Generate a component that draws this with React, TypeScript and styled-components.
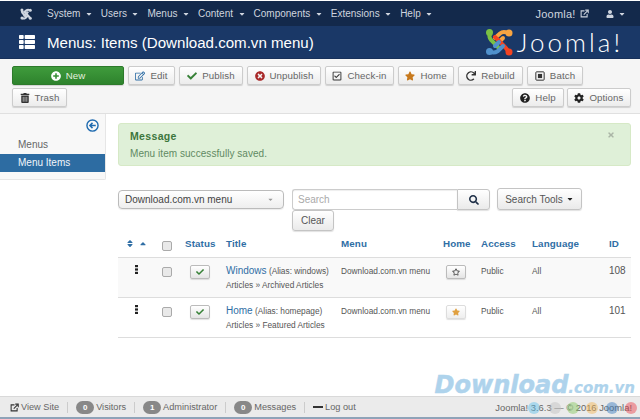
import React from "react";
import styled, { createGlobalStyle } from "styled-components";
import {
  FaPlusCircle, FaRegEdit, FaCheck, FaTimesCircle, FaRegCheckSquare, FaStar, FaRegStar, FaRedo,
  FaTrashAlt, FaQuestionCircle, FaCog, FaThList, FaUser, FaSearch, FaCaretDown, FaSort, FaCaretUp,
  FaTimes,
} from "react-icons/fa";

const Global = createGlobalStyle`
  html, body { margin: 0; padding: 0; background: #fff; }
  body { font-family: "Liberation Sans", Arial, sans-serif; color: #555; width: 640px; height: 419px; overflow: hidden; }
  * { box-sizing: border-box; }
`;

const Page = styled.div`
  position: relative;
  width: 640px;
  height: 419px;
  display: flex;
  flex-direction: column;
  overflow: hidden;
`;

const TopBar = styled.nav`
  height: 25px;
  margin-top: 1px;
  background: #13294b;
  display: flex;
  align-items: center;
  color: #cfd5df;
  font-size: 10px;
  padding: 0 14px 0 20px;
`;
const NavMenu = styled.div`
  display: flex;
  align-items: center;
  margin-left: 15px;
  gap: 8px;
`;
const NavItem = styled.span`
  display: inline-flex;
  align-items: center;
  gap: 4.5px;
  svg { width: 8px; height: 8px; }
`;
const NavRight = styled.div`
  margin-left: auto;
  display: flex;
  align-items: center;
  gap: 17px;
`;
const NavLink = styled.span`
  display: inline-flex;
  align-items: center;
  font-size: 11px;
  letter-spacing: 0.2px;
`;
const SmallIcon = styled.span`
  display: inline-flex;
  margin-left: 4px;
  svg { width: 9px; height: 9px; }
`;

const Header = styled.header`
  height: 33px;
  background: #1a3867;
  display: flex;
  align-items: center;
  padding-left: 19px;
  color: #fff;
  border-bottom: 1px solid #17305a;
`;
const HeaderIcon = styled.span`
  display: inline-flex;
  margin-right: 12px;
  svg { width: 16px; height: 16px; display: block; }
`;
const Title = styled.h1`
  margin: 0;
  font-size: 15.1px;
  font-weight: 400;
  white-space: nowrap;
`;
const Brand = styled.div`
  margin-left: auto;
  margin-right: 17px;
  display: flex;
  align-items: center;
  gap: 4px;
`;
const BrandText = styled.span`
  font-family: Lato, "Liberation Sans", sans-serif;
  font-weight: 300;
  font-size: 26px;
  line-height: 28px;
  letter-spacing: 3px;
  color: #fff;
`;

const Toolbar = styled.div`
  background: #f5f5f5;
  border-bottom: 1px solid #e0e0e0;
  height: 55px;
  padding: 7px 9px 0 12px;
  display: flex;
  flex-wrap: wrap;
  align-content: flex-start;
  column-gap: 4px;
  row-gap: 3px;
`;
const ToolButton = styled.button<{ $w: number }>`
  width: ${(p) => p.$w}px;
  height: 19px;
  padding: 0;
  display: inline-flex;
  align-items: center;
  justify-content: center;
  gap: 5px;
  border-radius: 2px;
  font-family: inherit;
  font-size: 9.7px;
  letter-spacing: 0.1px;
  color: #666;
  background: linear-gradient(#fff, #ececec);
  border: 1px solid #ccc;
  box-shadow: 0 1px 1px rgba(0, 0, 0, 0.15);
  svg { width: 10px; height: 10px; }
`;
const NewButton = styled(ToolButton)`
  color: #e3f0df;
  border-color: #2d7a2b;
  background: linear-gradient(#3f9b3c, #2e832d);
`;
const RightGroup = styled.div`
  margin-left: auto;
  display: flex;
  gap: 3px;
`;

const Body = styled.div`
  flex: 1;
  display: flex;
  min-height: 0;
`;
const Sidebar = styled.aside`
  width: 106px;
  height: 66px;
  background: #f8f8f8;
  border-right: 1px solid #e6e6e6;
  border-bottom: 1px solid #e6e6e6;
  border-bottom-right-radius: 2px;
  display: flex;
  flex-direction: column;
`;
const Collapse = styled.div`
  height: 22px;
  display: flex;
  justify-content: flex-end;
  align-items: flex-start;
  padding: 5px 6px 0 0;
  color: #1f6bb0;
`;
const SideItem = styled.div<{ $active?: boolean }>`
  height: 18px;
  line-height: 18px;
  font-size: 10px;
  padding-left: 18px;
  color: ${(p) => (p.$active ? "#f2f6fa" : "#666")};
  background: ${(p) => (p.$active ? "#2d6ca2" : "transparent")};
`;
const Main = styled.main`
  flex: 1;
  padding: 9px 9px 0 12px;
  min-width: 0;
`;
const Alert = styled.div`
  position: relative;
  height: 43px;
  background: #dff0d8;
  border: 1px solid #d6e9c6;
  border-radius: 3px;
  padding: 5px 11px;
  color: #5f8a63;
`;
const AlertTitle = styled.div`
  font-size: 10.5px;
  font-weight: 700;
  letter-spacing: 0.35px;
  color: #3c763d;
  line-height: 14px;
`;
const AlertText = styled.div`
  font-size: 10px;
  letter-spacing: 0.05px;
  line-height: 14px;
  margin-top: 4px;
`;
const Close = styled.span`
  position: absolute;
  right: 15px;
  top: 7px;
  color: #aab5a6;
  display: flex;
  svg { width: 8px; height: 8px; }
`;
const Filters = styled.div`
  margin-top: 22px;
  display: flex;
  align-items: flex-start;
`;
const Select = styled.div`
  width: 166px;
  height: 19px;
  margin-top: 2px;
  margin-right: 8px;
  padding: 0 9px 0 6px;
  display: flex;
  align-items: center;
  justify-content: space-between;
  font-size: 10px;
  color: #444;
  background: linear-gradient(#fff, #eee);
  border: 1px solid #bbb;
  border-radius: 4px;
  box-shadow: 0 1px 1px rgba(0,0,0,0.08);
  svg { width: 7px; height: 7px; color: #999; }
`;
const SearchCol = styled.div`
  width: 198px;
  display: flex;
  flex-direction: column;
  margin-right: 7px;
`;
const SearchRow = styled.div`
  display: flex;
  height: 21px;
  margin-top: 1px;
`;
const Input = styled.div`
  width: 165px;
  border: 1px solid #ccc;
  border-right: 0;
  border-radius: 3px 0 0 3px;
  background: #fff;
  box-shadow: inset 0 1px 1px rgba(0,0,0,0.07);
  font-size: 10px;
  color: #aaa;
  padding: 4px 5px;
  line-height: 12px;
`;
const SearchBtn = styled.div`
  width: 33px;
  border: 1px solid #c4c4c4;
  border-radius: 0 3px 3px 0;
  background: linear-gradient(#fff, #eaeaea);
  display: flex;
  align-items: center;
  justify-content: center;
  color: #1f3048;
  box-shadow: 0 1px 1px rgba(0,0,0,0.12);
  svg { width: 10px; height: 10px; }
`;
const ClearBtn = styled.div`
  width: 42px;
  height: 21px;
  border: 1px solid #c4c4c4;
  border-radius: 3px;
  background: linear-gradient(#fff, #eaeaea);
  box-shadow: 0 1px 1px rgba(0,0,0,0.12);
  font-size: 10px;
  color: #555;
  display: flex;
  align-items: center;
  justify-content: center;
`;
const ToolsBtn = styled.div`
  width: 85px;
  height: 22px;
  border: 1px solid #c4c4c4;
  border-radius: 3px;
  background: linear-gradient(#fff, #eaeaea);
  box-shadow: 0 1px 1px rgba(0,0,0,0.12);
  font-size: 10px;
  color: #555;
  display: flex;
  align-items: center;
  justify-content: center;
  gap: 3px;
  svg { width: 8px; height: 8px; color: #222; }
`;

const columns = "40px 27px 41px 115px 102px 38px 51px 77px 22px";
const HeadRow = styled.div`
  display: grid;
  grid-template-columns: ${columns};
  height: 27px;
  align-items: center;
  padding-bottom: 1px;
  border-bottom: 1px solid #ddd;
  font-size: 9.8px;
  font-weight: 700;
  color: #2f6ea5;
  letter-spacing: 0.1px;
`;
const Row = styled.div<{ $odd?: boolean }>`
  display: grid;
  grid-template-columns: ${columns};
  height: 40px;
  padding-top: 6px;
  align-items: start;
  border-bottom: 1px solid #ddd;
  background: ${(p) => (p.$odd ? "#f9f9f9" : "#fff")};
  font-size: 8.3px;
  color: #555;
`;
const SortIcons = styled.div`
  display: flex;
  gap: 5px;
  padding-left: 8px;
  svg { width: 8px; height: 9px; }
`;
const Check = styled.span`
  display: block;
  width: 10px;
  height: 10px;
  margin: 0 0 0 4px;
  background: #e9e9e9;
  border: 1px solid #aaa;
  border-radius: 2px;
`;
const HeadCheck = styled(Check)`
  margin-top: 5px;
`;
const CheckCell = styled.div`
  padding-top: 3px;
`;
const Handle = styled.div`
  padding: 1px 0 0 17px;
  color: #222;
  svg { width: 3px; height: 9px; display: block; }
`;
const StateBtn = styled.div<{ $ml: number; $flat?: boolean }>`
  margin-left: ${(p) => p.$ml}px;
  margin-top: 1px;
  width: 20px;
  height: 14px;
  display: flex;
  align-items: center;
  justify-content: center;
  border: 1px solid ${(p) => (p.$flat ? "#ddd" : "#bbb")};
  border-radius: 2px;
  background: linear-gradient(#fff, ${(p) => (p.$flat ? "#eee" : "#e4e4e4")});
  box-shadow: 0 1px 1px rgba(0,0,0,0.12);
  svg { width: 8px; height: 8px; }
`;
const TitleLine = styled.div`
  line-height: 13px;
  white-space: nowrap;
`;
const TitleLink = styled.span`
  font-size: 10px;
  color: #2f6ea5;
`;
const SubLine = styled.div`
  line-height: 13px;
  margin-top: 1px;
  white-space: nowrap;
`;
const PlainCell = styled.div`
  line-height: 14px;
  white-space: nowrap;
`;
const IdCell = styled.div`
  font-size: 10px;
  line-height: 14px;
`;

const Footer = styled.footer`
  position: absolute;
  left: 0;
  right: 0;
  bottom: 0;
  height: 23px;
  border-top: 1px solid #d9d9d9;
  border-bottom: 2px solid #8fa3b8;
  background: #ebebeb;
  display: flex;
  align-items: center;
  padding: 0 8px 0 10px;
  font-size: 9.2px;
  color: #666;
`;
const FootItem = styled.span`
  display: inline-flex;
  align-items: center;
  gap: 2px;
  padding-right: 8px;
  margin-right: 8px;
  border-right: 1px solid #ccc;
  height: 11px;
  svg { width: 9px; height: 9px; }
`;
const LastItem = styled(FootItem)`
  border: 0;
`;
const Badge = styled.span`
  width: 18px;
  height: 13px;
  border-radius: 7px;
  background: #888;
  color: #fff;
  font-size: 8px;
  font-weight: 700;
  display: inline-flex;
  align-items: center;
  justify-content: center;
`;
const Dash = styled.span`
  display: inline-block;
  width: 10px;
  height: 2px;
  background: #333;
`;
const FootRight = styled.span`
  margin-left: auto;
  font-size: 9.4px;
  white-space: nowrap;
`;
const Watermark = styled.div`
  position: absolute;
  right: 5px;
  top: 373px;
  font-family: "DejaVu Sans", sans-serif;
  font-style: italic;
  font-weight: 700;
  color: #aed3ec;
  line-height: 24px;
  white-space: nowrap;
`;
const WaterBig = styled.span`
  font-size: 24px;
  -webkit-text-stroke: 0.5px #aed3ec;
`;
const WaterSmall = styled.span`
  font-size: 15px;
  -webkit-text-stroke: 0.2px #aed3ec;
`;
const Dots = styled.div`
  position: absolute;
  right: 0;
  bottom: 3px;
`;
const Dot = styled.span<{ $x: number; $c: string }>`
  position: absolute;
  right: ${(p) => p.$x}px;
  bottom: 0;
  width: 12px;
  height: 12px;
  border-radius: 50%;
  background: ${(p) => p.$c};
`;

const JoomlaMark = ({ size, mono }: { size: number; mono?: boolean }) => {
  const c = (v: string) => (mono ? "#cfd5df" : v);
  return (
    <svg width={size} height={size} viewBox="0 0 28 28" fill="none" strokeLinecap="round" strokeWidth={mono ? 5 : 4}>
      <path d="M13 19 L6 12 Q3.5 9 5 6" stroke={c("#7ac143")} />
      <circle cx="4.5" cy="4.5" r="3.5" fill={c("#7ac143")} />
      <path d="M10 10 L15 5.5 Q18 3 23 5" stroke={c("#f9a541")} />
      <path d="M18 10 L14 14" stroke={c("#f9a541")} />
      <circle cx="24" cy="5" r="3.5" fill={c("#f9a541")} />
      <path d="M10 9 L19 18 Q22 21 23 23" stroke={c("#f44321")} />
      <circle cx="24" cy="24" r="3.5" fill={c("#f44321")} />
      <path d="M18 18 L13 23 Q9 25.5 6 24" stroke={c("#5091cd")} />
      <path d="M10 18 L14 14" stroke={c("#5091cd")} />
      <circle cx="4.5" cy="23.5" r="3.5" fill={c("#5091cd")} />
    </svg>
  );
};

const CircleLeft = () => (
  <svg width="13" height="13" viewBox="0 0 14 14" fill="none" stroke="currentColor">
    <circle cx="7" cy="7" r="6" strokeWidth="1.5" />
    <path d="M10.5 7H4.5M7 4.2 4.2 7 7 9.8" strokeWidth="1.6" />
  </svg>
);
const BatchIcon = () => (
  <svg viewBox="0 0 12 12">
    <rect x="1" y="1" width="10" height="10" rx="1" fill="none" stroke="#333" strokeWidth="1.2" />
    <rect x="3.5" y="3.5" width="5" height="5" fill="#333" />
  </svg>
);
const NewTabIcon = ({ color }: { color: string }) => (
  <svg viewBox="0 0 12 12" fill="none" stroke={color}>
    <path d="M6 2.5H1.5V10.5H9.5V6.5" strokeWidth="1.4" />
    <path d="M5 7.5 10 2.5M7 1.5H11V5.5" strokeWidth="1.4" />
  </svg>
);
const HandleIcon = () => (
  <svg viewBox="0 0 3 9" fill="currentColor">
    <rect width="3" height="2.2" />
    <rect y="3.4" width="3" height="2.2" />
    <rect y="6.8" width="3" height="2.2" />
  </svg>
);

const toolbar = [
  { t: "Edit", w: 47, i: <FaRegEdit color="#2f6ea5" /> },
  { t: "Publish", w: 64, i: <FaCheck color="#378137" /> },
  { t: "Unpublish", w: 74, i: <FaTimesCircle color="#a92a2a" /> },
  { t: "Check-in", w: 69, i: <FaRegCheckSquare color="#333" /> },
  { t: "Home", w: 56, i: <FaStar color="#c7791d" /> },
  { t: "Rebuild", w: 65, i: <FaRedo color="#333" /> },
  { t: "Batch", w: 56, i: <BatchIcon /> },
];

const rows = [
  { title: "Windows", alias: "windows", cat: "Archived Articles", id: 108, home: false },
  { title: "Home", alias: "homepage", cat: "Featured Articles", id: 101, home: true },
];

const nav = ["System", "Users", "Menus", "Content", "Components", "Extensions", "Help"];

export default function App() {
  return (
    <Page>
      <Global />
      <TopBar>
        <JoomlaMark size={12} mono />
        <NavMenu>
          {nav.map((n) => (
            <NavItem key={n}>
              {n}
              <FaCaretDown />
            </NavItem>
          ))}
        </NavMenu>
        <NavRight>
          <NavLink>
            Joomla!
            <SmallIcon>
              <NewTabIcon color="#cfd5df" />
            </SmallIcon>
          </NavLink>
          <NavItem>
            <FaUser />
            <FaCaretDown />
          </NavItem>
        </NavRight>
      </TopBar>
      <Header>
        <HeaderIcon>
          <FaThList />
        </HeaderIcon>
        <Title>Menus: Items (Download.com.vn menu)</Title>
        <Brand>
          <JoomlaMark size={28} />
          <BrandText>Joomla!</BrandText>
        </Brand>
      </Header>
      <Toolbar>
        <NewButton $w={112}>
          <FaPlusCircle color="#fff" />
          New
        </NewButton>
        {toolbar.map((b) => (
          <ToolButton key={b.t} $w={b.w}>
            {b.i}
            {b.t}
          </ToolButton>
        ))}
        <ToolButton $w={55}>
          <FaTrashAlt color="#333" />
          Trash
        </ToolButton>
        <RightGroup>
          <ToolButton $w={52}>
            <FaQuestionCircle color="#222" />
            Help
          </ToolButton>
          <ToolButton $w={64}>
            <FaCog color="#222" />
            Options
          </ToolButton>
        </RightGroup>
      </Toolbar>
      <Body>
        <Sidebar>
          <Collapse>
            <CircleLeft />
          </Collapse>
          <SideItem>Menus</SideItem>
          <SideItem $active>Menu Items</SideItem>
        </Sidebar>
        <Main>
          <Alert>
            <AlertTitle>Message</AlertTitle>
            <AlertText>Menu item successfully saved.</AlertText>
            <Close>
              <FaTimes />
            </Close>
          </Alert>
          <Filters>
            <Select>
              Download.com.vn menu
              <FaCaretDown />
            </Select>
            <SearchCol>
              <SearchRow>
                <Input>Search</Input>
                <SearchBtn>
                  <FaSearch />
                </SearchBtn>
              </SearchRow>
              <ClearBtn>Clear</ClearBtn>
            </SearchCol>
            <ToolsBtn>
              Search Tools
              <FaCaretDown />
            </ToolsBtn>
          </Filters>
          <div>
            <HeadRow>
              <SortIcons>
                <FaSort />
                <FaCaretUp />
              </SortIcons>
              <HeadCheck />
              <span>Status</span>
              <span>Title</span>
              <span>Menu</span>
              <span>Home</span>
              <span>Access</span>
              <span>Language</span>
              <span>ID</span>
            </HeadRow>
            {rows.map((r, i) => (
              <Row key={r.id} $odd={i === 0}>
                <Handle>
                  <HandleIcon />
                </Handle>
                <CheckCell>
                  <Check />
                </CheckCell>
                <StateBtn $ml={5}>
                  <FaCheck color="#378137" />
                </StateBtn>
                <div>
                  <TitleLine>
                    <TitleLink>{r.title}</TitleLink> (Alias: {r.alias})
                  </TitleLine>
                  <SubLine>Articles » {r.cat}</SubLine>
                </div>
                <PlainCell>Download.com.vn menu</PlainCell>
                <StateBtn $ml={3} $flat={r.home}>
                  {r.home ? <FaStar color="#e0a040" /> : <FaRegStar color="#333" />}
                </StateBtn>
                <PlainCell>Public</PlainCell>
                <PlainCell>All</PlainCell>
                <IdCell>{r.id}</IdCell>
              </Row>
            ))}
          </div>
        </Main>
      </Body>
      <Watermark>
        <WaterBig>Download</WaterBig>
        <WaterSmall>.com.vn</WaterSmall>
      </Watermark>
      <Footer>
        <FootItem>
          <NewTabIcon color="#333" />
          View Site
        </FootItem>
        <FootItem>
          <Badge>0</Badge>
          Visitors
        </FootItem>
        <FootItem>
          <Badge>1</Badge>
          Administrator
        </FootItem>
        <FootItem>
          <Badge>0</Badge>
          Messages
        </FootItem>
        <LastItem>
          <Dash />
          Log out
        </LastItem>
        <FootRight>Joomla! 3.6.3 — © 2016 Joomla!</FootRight>
        <Dots>
          <Dot $x={100} $c="rgba(90,190,235,0.45)" />
          <Dot $x={79} $c="rgba(190,190,190,0.45)" />
          <Dot $x={61} $c="rgba(130,200,90,0.45)" />
          <Dot $x={42} $c="rgba(245,180,80,0.45)" />
          <Dot $x={22} $c="rgba(50,120,190,0.45)" />
          <Dot $x={3} $c="rgba(235,60,70,0.45)" />
        </Dots>
      </Footer>
    </Page>
  );
}
